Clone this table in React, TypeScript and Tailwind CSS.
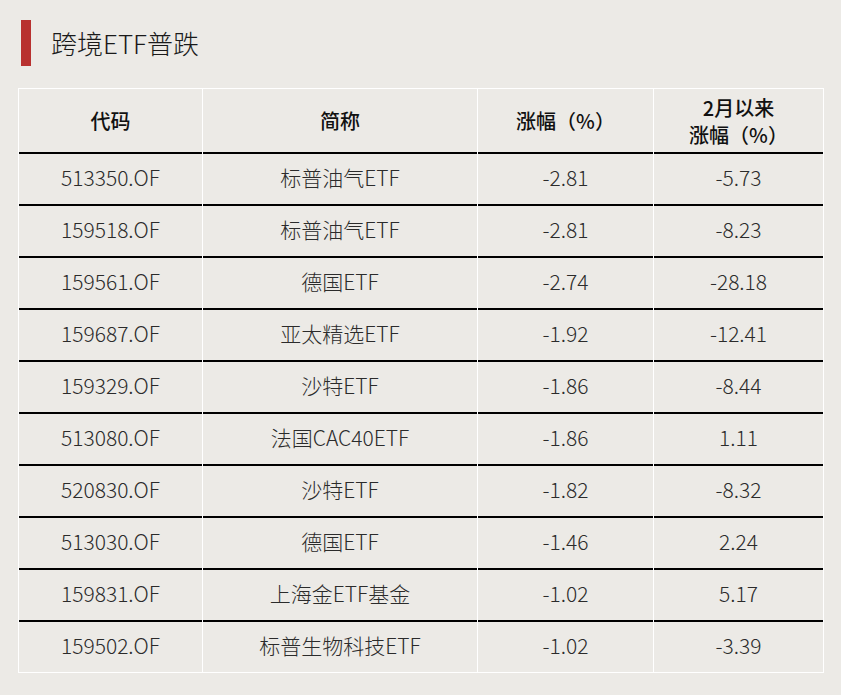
import React from 'react'

const rows = [
  { code: '513350.OF', name: '标普油气ETF', chg: '-2.81', since: '-5.73' },
  { code: '159518.OF', name: '标普油气ETF', chg: '-2.81', since: '-8.23' },
  { code: '159561.OF', name: '德国ETF', chg: '-2.74', since: '-28.18' },
  { code: '159687.OF', name: '亚太精选ETF', chg: '-1.92', since: '-12.41' },
  { code: '159329.OF', name: '沙特ETF', chg: '-1.86', since: '-8.44' },
  { code: '513080.OF', name: '法国CAC40ETF', chg: '-1.86', since: '1.11' },
  { code: '520830.OF', name: '沙特ETF', chg: '-1.82', since: '-8.32' },
  { code: '513030.OF', name: '德国ETF', chg: '-1.46', since: '2.24' },
  { code: '159831.OF', name: '上海金ETF基金', chg: '-1.02', since: '5.17' },
  { code: '159502.OF', name: '标普生物科技ETF', chg: '-1.02', since: '-3.39' },
]

const font = { fontFamily: '"Noto Sans CJK SC", "Liberation Sans", sans-serif' }

export default function App() {
  return (
    <div className="w-[841px] h-[695px] bg-[#ECEAE6] overflow-hidden" style={font}>
      {/* 标题 */}
      <div className="flex items-center pt-[20px] pl-[21px]">
        <div className="w-[10px] h-[46px] bg-[#B8312F]" />
        <h1 className="ml-[20px] text-[26px] leading-none font-light text-[#1a1a1a]">跨境ETF普跌</h1>
      </div>

      {/* 表格 */}
      <div className="mt-[22px] ml-[18px] w-[806px] border border-white bg-white">
        <div className="grid grid-cols-[183px_274px_175px_169px] gap-x-px h-[63px]">
          <div className="bg-[#ECEAE6] flex items-center justify-center text-[20px] font-medium text-[#111]">代码</div>
          <div className="bg-[#ECEAE6] flex items-center justify-center text-[20px] font-medium text-[#111]">简称</div>
          <div className="bg-[#ECEAE6] flex items-center justify-center text-[20px] font-medium text-[#111]">涨幅（%）</div>
          <div className="bg-[#ECEAE6] flex flex-col items-center justify-center text-[20px] leading-[27px] font-medium text-[#111]">
            <span>2月以来</span>
            <span>涨幅（%）</span>
          </div>
        </div>
        {rows.map((r) => (
          <div key={r.code + r.since} className="grid grid-cols-[183px_274px_175px_169px] gap-x-px h-[52px] text-[21px] leading-none font-light text-[#2b2b2b]">
            <div className="bg-[#ECEAE6] border-t-2 border-black pb-[3px] flex items-center justify-center">{r.code}</div>
            <div className="bg-[#ECEAE6] border-t-2 border-black pb-[3px] flex items-center justify-center">{r.name}</div>
            <div className="bg-[#ECEAE6] border-t-2 border-black pb-[3px] flex items-center justify-center">{r.chg}</div>
            <div className="bg-[#ECEAE6] border-t-2 border-black pb-[3px] flex items-center justify-center">{r.since}</div>
          </div>
        ))}
      </div>
    </div>
  )
}
